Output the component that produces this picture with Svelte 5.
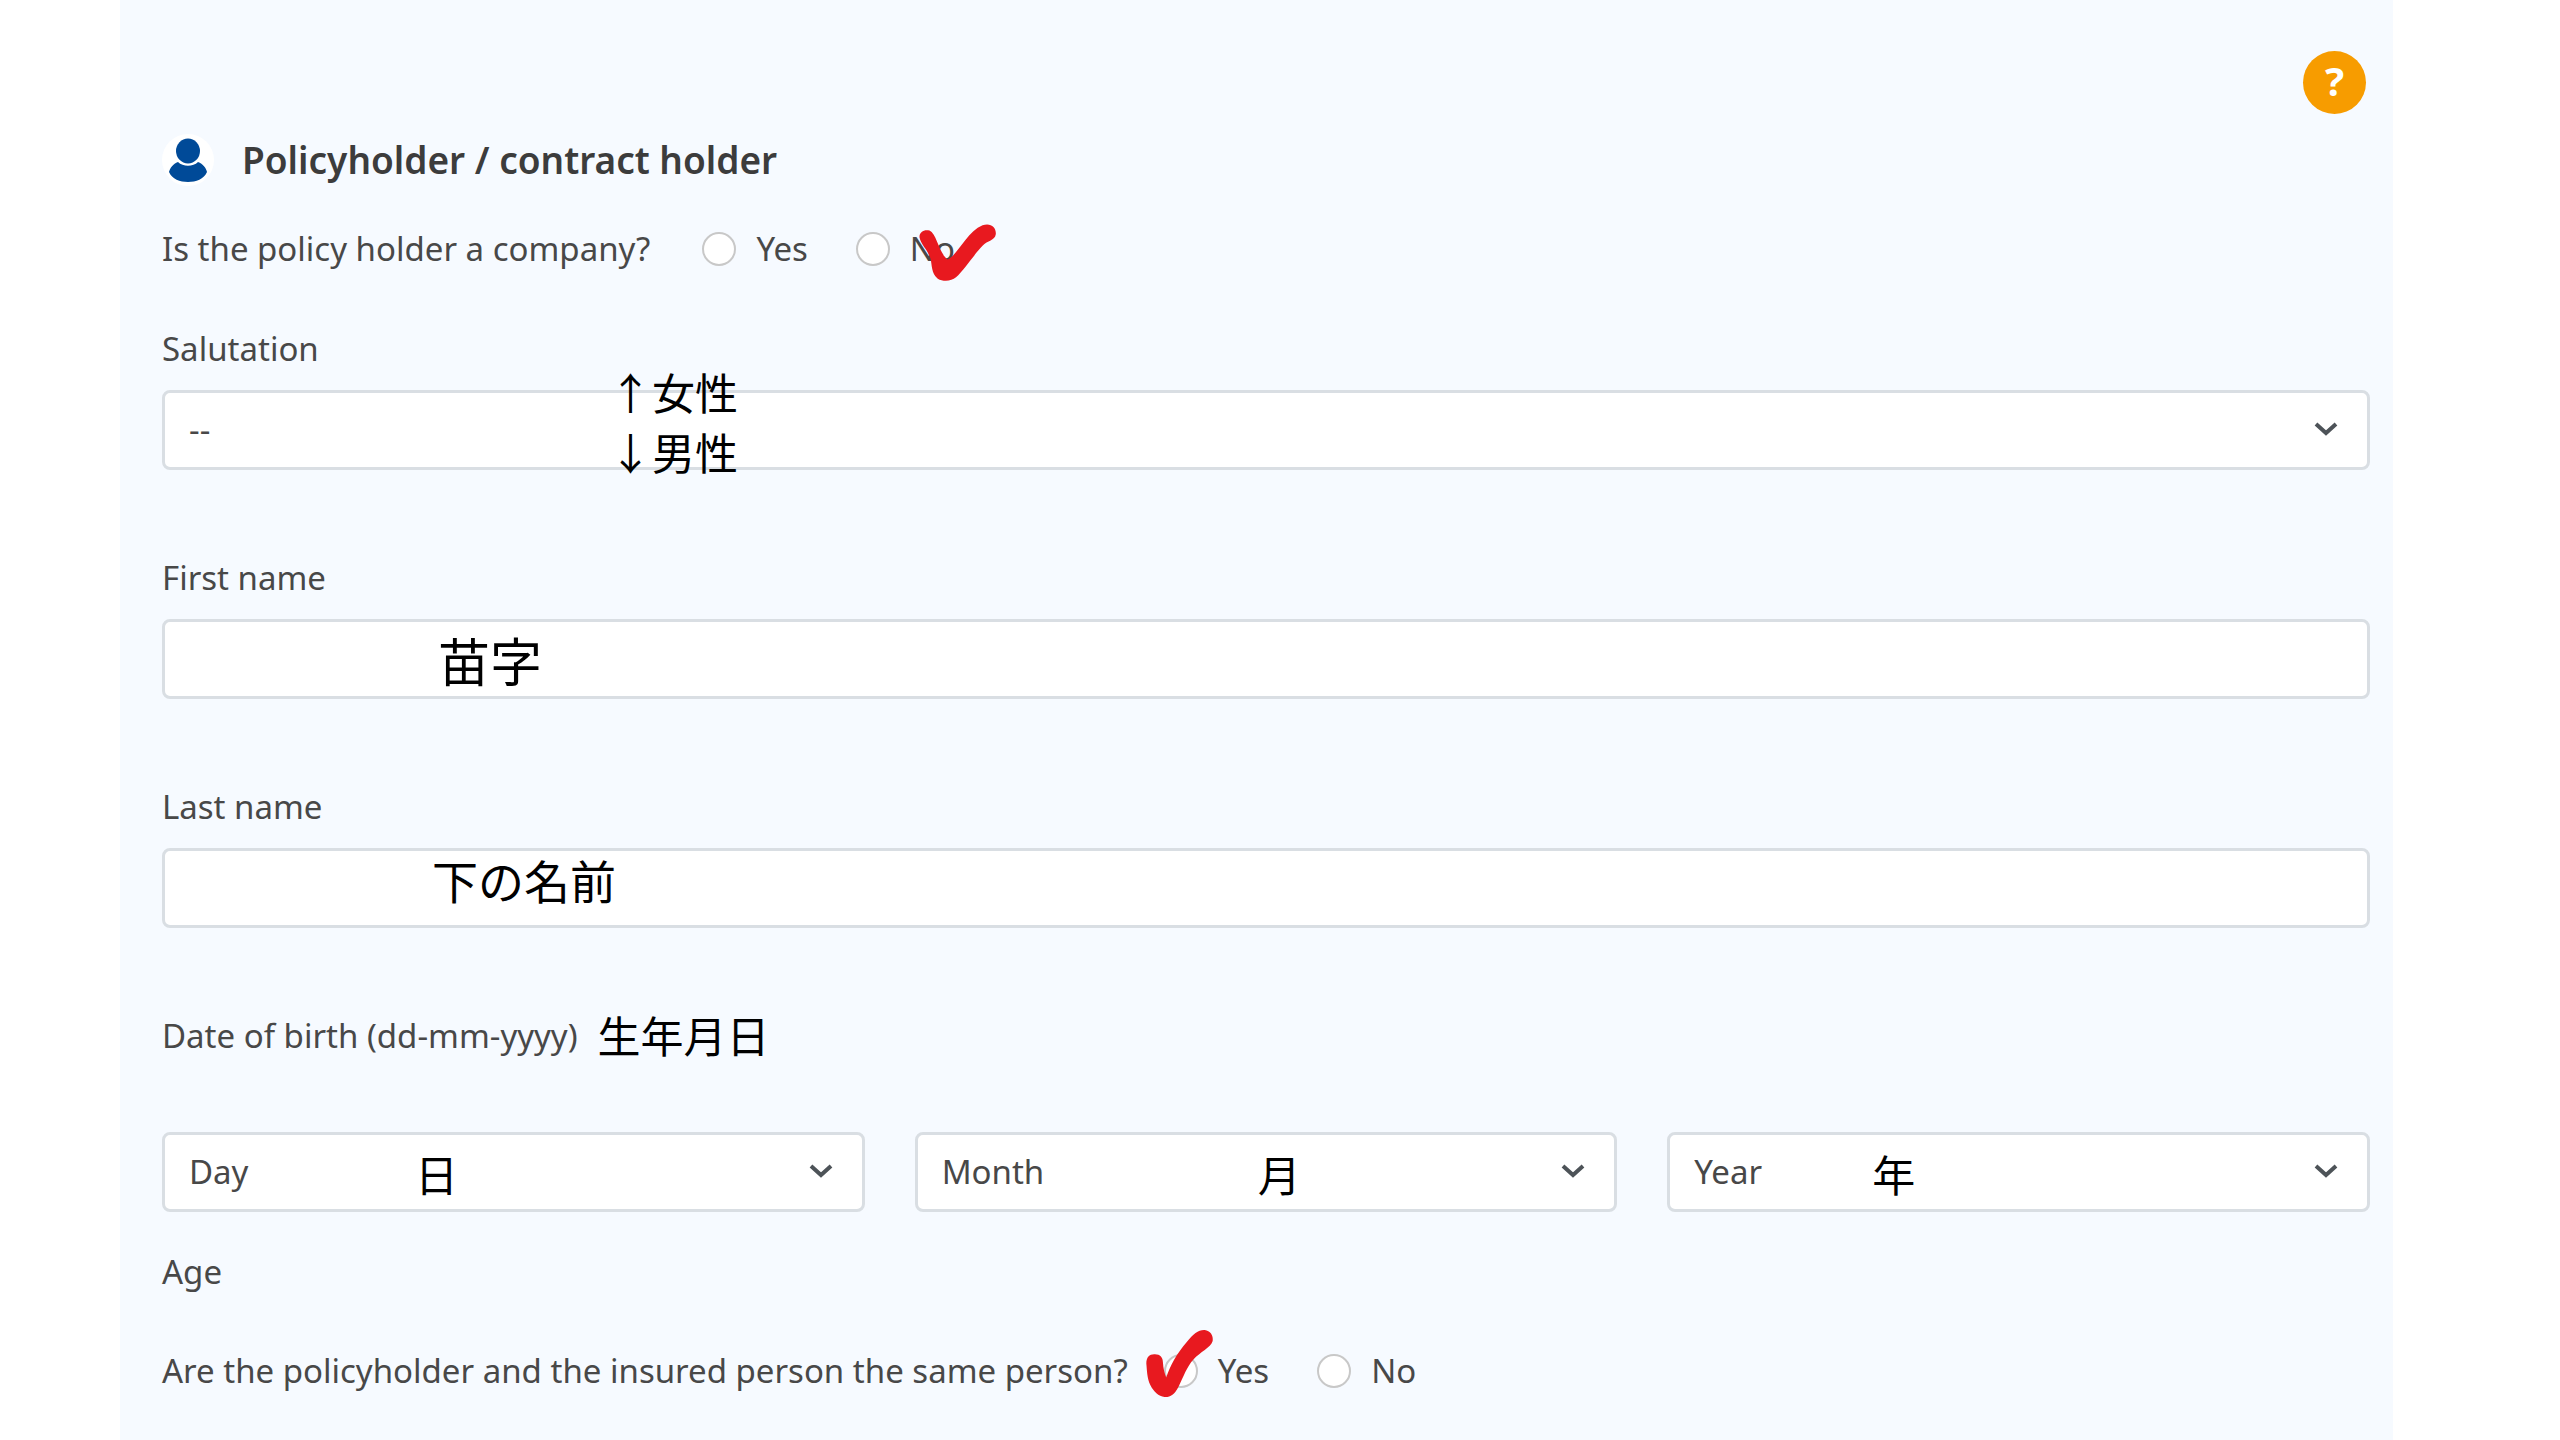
<script lang="ts">
  let company = $state('')
  let samePerson = $state('')
  let firstName = $state('')
  let lastName = $state('')

  const days = Array.from({ length: 31 }, (_, i) => i + 1)
  const years = Array.from({ length: 100 }, (_, i) => 2024 - i)
  const months = [
    'January', 'February', 'March', 'April', 'May', 'June', 'July',
    'August', 'September', 'October', 'November', 'December',
  ]

  const birth = [
    { id: 'day', label: 'Day', note: '日', list: days },
    { id: 'month', label: 'Month', note: '月', list: months },
    { id: 'year', label: 'Year', note: '年', list: years },
  ]
</script>

{#snippet chevron()}
  <svg class="chevron" viewBox="0 0 24 16" aria-hidden="true">
    <path d="M2 3 L12 12 L22 3" />
  </svg>
{/snippet}

<main>
  <form class="panel">
    <div class="top">
      <button type="button" class="help" aria-label="Help">?</button>
    </div>

    <h2>
      <svg class="person" viewBox="0 0 52 52" aria-hidden="true">
        <circle cx="26" cy="26" r="26" fill="#fff" />
        <path d="M16 28 C11 30 8 34 7 38 C10 45 18 48 26 48 C34 48 42 45 45 38 C44 34 41 30 36 28 C31 33 21 33 16 28Z" />
        <ellipse cx="26" cy="17" rx="12" ry="12.5" />
      </svg>
      Policyholder / contract holder
    </h2>

    <div class="question company" role="radiogroup" aria-labelledby="q-company">
      <span id="q-company">Is the policy holder a company?</span>
      <div class="options">
        <label><input type="radio" name="company" value="yes" bind:group={company} />Yes</label>
        <label>
          <input type="radio" name="company" value="no" bind:group={company} />No
          <svg class="tick tick-no" viewBox="116 68 240 178" aria-hidden="true">
            <path d="M120 112 C118 95 135 86 150 91 C172 100 178 160 205 178 C235 165 262 95 310 75 C335 66 352 82 350 102 C347 122 325 120 310 137 C285 162 255 210 230 232 C215 245 190 245 175 236 C155 220 158 195 153 175 C145 150 125 135 120 112Z" />
          </svg>
        </label>
      </div>
    </div>

    <div class="field">
      <label for="salutation">Salutation</label>
      <div class="control">
        <select id="salutation">
          <option>--</option>
          <option>Mrs</option>
          <option>Mr</option>
        </select>
        {@render chevron()}
        <span class="note note-salutation">↑女性<br />↓男性</span>
      </div>
    </div>

    <div class="field">
      <label for="first">First name</label>
      <div class="control">
        <input id="first" type="text" bind:value={firstName} />
        <span class="note note-first">苗字</span>
      </div>
    </div>

    <div class="field">
      <label for="last">Last name</label>
      <div class="control">
        <input id="last" type="text" bind:value={lastName} />
        <span class="note note-last">下の名前</span>
      </div>
    </div>

    <div class="birth-label">
      <span>Date of birth (dd-mm-yyyy)</span>
      <span class="ja">生年月日</span>
    </div>
    <div class="birth">
      {#each birth as b}
        <div class="control">
          <select id={b.id} aria-label={b.label}>
            <option>{b.label}</option>
            {#each b.list as v}
              <option>{v}</option>
            {/each}
          </select>
          {@render chevron()}
          <span class="note note-{b.id}">{b.note}</span>
        </div>
      {/each}
    </div>

    <div class="age">Age</div>

    <div class="question same" role="radiogroup" aria-labelledby="q-same">
      <span id="q-same">Are the policyholder and the insured person the same person?</span>
      <div class="options">
        <label>
          <input type="radio" name="same" value="yes" bind:group={samePerson} />Yes
          <svg class="tick tick-yes" viewBox="74 56 208 208" aria-hidden="true">
            <path d="M78 160 C78 140 88 131 104 132 C120 132 128 142 128 156 C129 175 133 190 138 202 C150 165 170 130 200 95 C220 70 235 58 254 59 C270 61 281 75 278 92 C272 112 240 125 220 148 C200 170 190 200 175 230 C162 255 150 262 133 261 C115 260 100 245 90 225 C80 205 80 180 78 160Z" />
          </svg>
        </label>
        <label><input type="radio" name="same" value="no" bind:group={samePerson} />No</label>
      </div>
    </div>
  </form>
</main>

<style>
  :global(body) {
    background: #fff;
  }

  main {
    padding: 0 167px 0 120px;
    font: 33px/46px 'Noto Sans', 'Noto Sans CJK JP', sans-serif;
    color: #484848;
  }

  .panel {
    box-sizing: border-box;
    min-height: 100vh;
    padding: 51px 23px 40px 42px;
    background: #f6faff;
  }

  .top {
    display: flex;
    justify-content: flex-end;
    padding-right: 4px;
  }

  .help {
    width: 63px;
    height: 63px;
    padding: 0 0 4px;
    border: 0;
    border-radius: 50%;
    background: #f79c00;
    color: #fff;
    font: 700 40px/56px 'Noto Sans', sans-serif;
    cursor: pointer;
  }

  h2 {
    display: flex;
    align-items: center;
    gap: 28px;
    margin: 20px 0 40px;
    font-size: 37px;
    font-weight: 600;
    line-height: 52px;
    color: #3c3c3c;
  }

  .person {
    width: 52px;
    height: 52px;
    fill: #004a98;
  }

  .question,
  .options,
  .options label {
    display: flex;
    align-items: center;
  }

  .options {
    gap: 48px;
  }

  .options label {
    position: relative;
    gap: 20px;
  }

  .company {
    gap: 52px;
    margin-bottom: 54px;
  }

  .same {
    gap: 36px;
  }

  input[type='radio'] {
    appearance: none;
    box-sizing: border-box;
    width: 34px;
    height: 34px;
    margin: 0;
    border: 2px solid #c8c8c8;
    border-radius: 50%;
    background: #fff;
  }

  input[type='radio']:checked {
    border: 10px solid #004a98;
  }

  .tick {
    position: absolute;
    fill: #e8191f;
    pointer-events: none;
  }

  .tick-no {
    top: -3px;
    left: 62px;
    width: 80px;
    height: 59px;
  }

  .tick-yes {
    top: -19px;
    left: -19px;
    width: 69px;
    height: 69px;
  }

  .field {
    display: flex;
    flex-direction: column;
    gap: 18px;
    margin-bottom: 85px;
  }

  .control {
    position: relative;
  }

  select,
  input[type='text'] {
    appearance: none;
    display: block;
    box-sizing: border-box;
    width: 100%;
    height: 80px;
    padding: 0 24px;
    border: 3px solid #d9dee3;
    border-radius: 8px;
    background: #fff;
    color: inherit;
    font: inherit;
  }

  .chevron {
    position: absolute;
    top: 31px;
    right: 32px;
    width: 24px;
    height: 16px;
    fill: none;
    stroke: #4d5358;
    stroke-width: 4;
    pointer-events: none;
  }

  /* handwritten hints that lie over the controls */
  .note,
  .ja {
    color: #000;
    font-family: 'Noto Sans CJK JP', sans-serif;
    font-size: 43px;
  }

  .ja {
    line-height: 42px;
  }

  .note {
    position: absolute;
    top: 11px;
    line-height: 60px;
    white-space: nowrap;
    pointer-events: none;
  }

  .note-salutation {
    top: -29px;
    left: 447px;
  }

  .note-first {
    left: 276px;
    font-size: 52px;
  }

  .note-last {
    top: 1px;
    left: 270px;
    font-size: 46px;
  }

  .note-day {
    left: 253px;
  }

  .note-month {
    left: 343px;
  }

  .note-year {
    left: 205px;
  }

  .birth-label {
    display: flex;
    gap: 20px;
    margin-bottom: 73px;
  }

  .birth {
    display: grid;
    grid-template-columns: repeat(3, 1fr);
    gap: 50px;
  }

  .age {
    margin: 37px 0 53px;
  }
</style>
